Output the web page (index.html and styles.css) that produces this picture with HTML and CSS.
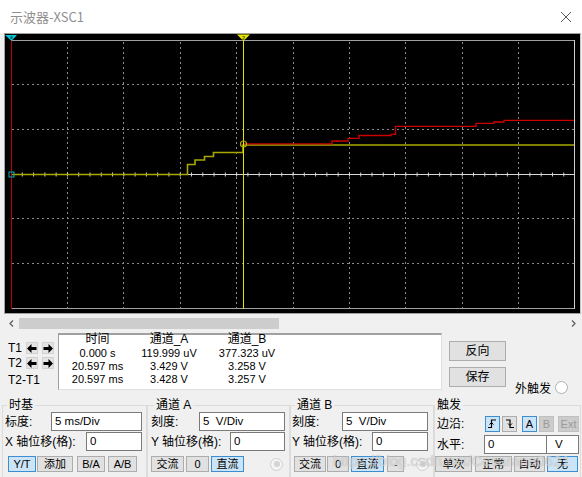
FILE: index.html
```html
<!DOCTYPE html>
<html lang="zh-CN">
<head>
<meta charset="utf-8">
<title>示波器-XSC1</title>
<link rel="stylesheet" href="styles.css">
</head>
<body>
<div class="titlebar">
  <span class="title">示波器-XSC1</span>
  <svg class="close" width="12" height="12" viewBox="0 0 12 12"><path d="M1 1L11 11M11 1L1 11" stroke="#5a5a5a" stroke-width="1"/></svg>
</div>

<div class="scope">
  <svg class="plot" width="575" height="279" viewBox="5 34 575 279">
    <rect x="5" y="34" width="575" height="279" fill="#000"/>
    <g stroke="#8a8a8a" stroke-width="1" stroke-dasharray="2 3">
      <line x1="67.5" y1="42" x2="67.5" y2="308"/>
      <line x1="123.5" y1="42" x2="123.5" y2="308"/>
      <line x1="180.5" y1="42" x2="180.5" y2="308"/>
      <line x1="236.5" y1="42" x2="236.5" y2="308"/>
      <line x1="293.5" y1="42" x2="293.5" y2="308"/>
      <line x1="349.5" y1="42" x2="349.5" y2="308"/>
      <line x1="405.5" y1="42" x2="405.5" y2="308"/>
      <line x1="462.5" y1="42" x2="462.5" y2="308"/>
      <line x1="518.5" y1="42" x2="518.5" y2="308"/>
      <line x1="12" y1="84.5" x2="574" y2="84.5"/>
      <line x1="12" y1="129.5" x2="574" y2="129.5"/>
      <line x1="12" y1="218.5" x2="574" y2="218.5"/>
      <line x1="12" y1="263.5" x2="574" y2="263.5"/>
    </g>
    <line x1="11" y1="174.5" x2="575" y2="174.5" stroke="#d8d8d8" stroke-width="1"/>
    <line x1="21.8" y1="174.5" x2="575" y2="174.5" stroke="#d8d8d8" stroke-width="4" stroke-dasharray="1 10.28"/>
    <g stroke="#a0a0a0" stroke-width="1" fill="none">
      <line x1="11" y1="40.5" x2="575" y2="40.5"/>
      <line x1="11" y1="308.5" x2="575" y2="308.5"/>
      <line x1="574.5" y1="40" x2="574.5" y2="309" stroke="#d0d0d0"/>
    </g>
    <polyline fill="none" stroke="#a8a800" stroke-width="1.6" points="11,174.5 187.5,174.5 187.5,164.5 195,164.5 195,160 204.5,160 204.5,156.5 213.5,156.5 213.5,152.5 243,152.5 243,145 574,145"/>
    <polyline fill="none" stroke="#cc0000" stroke-width="1.3" points="243,143.8 332,143.8 332,141 348,141 348,138.3 359,138.3 359,135.5 391,135.5 391,134.3 395.5,134.3 395.5,126.3 476,126.3 476,123.3 494,123.3 494,122 504,122 504,120.3 574,120.3"/>
    <line x1="11.5" y1="40" x2="11.5" y2="309" stroke="#c00000" stroke-width="1"/>
    <line x1="243.5" y1="40" x2="243.5" y2="309" stroke="#e4e400" stroke-width="1"/>
    <rect x="9" y="172" width="5" height="5" fill="none" stroke="#00b0c0" stroke-width="1"/>
    <circle cx="243.5" cy="144" r="3" fill="none" stroke="#b0b000" stroke-width="1.2"/>
    <polygon points="5,35 17,35 11.5,41" fill="#00c8d8"/>
    <rect x="10.5" y="36" width="2" height="3" fill="#006070"/>
    <polygon points="237,34.5 250,34.5 243.5,41" fill="#e8e800"/>
    <text x="243.5" y="39.5" font-size="5.5" font-family="Liberation Sans, sans-serif" font-weight="bold" text-anchor="middle" fill="#505000">2</text>
  </svg>
</div>

<div class="hscroll">
  <svg class="chev" width="12" height="9" viewBox="0 0 12 9"><path d="M7 1.5L4 4.5L7 7.5" fill="none" stroke="#606060" stroke-width="1.3"/></svg>
  <div class="thumb"></div>
  <div class="track"></div>
  <svg class="chev" width="12" height="9" viewBox="0 0 12 9"><path d="M5 1.5L8 4.5L5 7.5" fill="none" stroke="#606060" stroke-width="1.3"/></svg>
</div>

<div class="info">
  <div class="cursors">
    <div class="crow">
      <span class="tname">T1</span>
      <span class="abtn"><svg width="10" height="9" viewBox="0 0 10 9"><polygon points="0,4.5 4.5,0 4.5,3 9.5,3 9.5,6 4.5,6 4.5,9" fill="#000"/></svg></span>
      <span class="abtn"><svg width="10" height="9" viewBox="0 0 10 9"><polygon points="10,4.5 5.5,0 5.5,3 0.5,3 0.5,6 5.5,6 5.5,9" fill="#000"/></svg></span>
    </div>
    <div class="crow">
      <span class="tname">T2</span>
      <span class="abtn"><svg width="10" height="9" viewBox="0 0 10 9"><polygon points="0,4.5 4.5,0 4.5,3 9.5,3 9.5,6 4.5,6 4.5,9" fill="#000"/></svg></span>
      <span class="abtn"><svg width="10" height="9" viewBox="0 0 10 9"><polygon points="10,4.5 5.5,0 5.5,3 0.5,3 0.5,6 5.5,6 5.5,9" fill="#000"/></svg></span>
    </div>
    <div class="tdiff">T2-T1</div>
  </div>

  <div class="readout">
    <span class="hd">时间</span><span class="hd">通道_A</span><span class="hd">通道_B</span>
    <span>0.000 s</span><span>119.999 uV</span><span>377.323 uV</span>
    <span>20.597 ms</span><span>3.429 V</span><span>3.258 V</span>
    <span>20.597 ms</span><span>3.428 V</span><span>3.257 V</span>
  </div>

  <div class="actions">
    <button class="btn big">反向</button>
    <button class="btn big">保存</button>
  </div>

  <div class="ext">
    <span class="cjk">外触发</span>
    <span class="radio"></span>
  </div>
</div>

<div class="controls">
  <fieldset class="grp g1">
    <legend>时基</legend>
    <div class="frow"><span class="lbl w46">标度:</span><span class="inp w91">5 ms/Div</span></div>
    <div class="frow r2"><span class="lbl w81">X 轴位移(格):</span><span class="inp w56">0</span></div>
    <div class="brow b1">
      <button class="btn on w28">Y/T</button>
      <button class="btn w36 m1">添加</button>
      <button class="btn w28 m4">B/A</button>
      <button class="btn w29 m3">A/B</button>
    </div>
  </fieldset>

  <fieldset class="grp g2">
    <legend>通道 A</legend>
    <div class="frow"><span class="lbl w48">刻度:</span><span class="inp w86">5&nbsp;&nbsp;V/Div</span></div>
    <div class="frow r2"><span class="lbl w79">Y 轴位移(格):</span><span class="inp w55">0</span></div>
    <div class="brow">
      <button class="btn w33">交流</button>
      <button class="btn w23 m2">0</button>
      <button class="btn on w33 m2">直流</button>
      <span class="radio dis m26"></span>
    </div>
  </fieldset>

  <fieldset class="grp g3">
    <legend>通道 B</legend>
    <div class="frow"><span class="lbl w50">刻度:</span><span class="inp w86">5&nbsp;&nbsp;V/Div</span></div>
    <div class="frow r2"><span class="lbl w80">Y 轴位移(格):</span><span class="inp w56">0</span></div>
    <div class="brow b3">
      <button class="btn w32">交流</button>
      <button class="btn w22 m1">0</button>
      <button class="btn on w33 m2">直流</button>
      <button class="btn w17 m3">-</button>
      <span class="radio dis m12"></span>
    </div>
  </fieldset>

  <fieldset class="grp g4">
    <legend>触发</legend>
    <div class="frow e1">
      <span class="lbl w48">边沿:</span>
      <button class="btn on sq"><svg width="11" height="11" viewBox="0 0 11 11"><path d="M1 9.5H4.5V2H9" fill="none" stroke="#000" stroke-width="1.2"/><path d="M2.5 6.5L4.5 4.5L6.5 6.5" fill="none" stroke="#000" stroke-width="1"/></svg></button>
      <button class="btn sq m2"><svg width="11" height="11" viewBox="0 0 11 11"><path d="M2 2H6V9.5H10" fill="none" stroke="#000" stroke-width="1.2"/><path d="M4 5.5L6 7.5L8 5.5" fill="none" stroke="#000" stroke-width="1"/></svg></button>
      <button class="btn on sq m5">A</button>
      <button class="btn dim sq m2">B</button>
      <button class="btn dim w21 m4">Ext</button>
    </div>
    <div class="frow e2">
      <span class="lbl w47">水平:</span>
      <span class="inp w63">0</span>
      <span class="inp unit">V</span>
    </div>
    <div class="brow b4">
      <button class="btn w37">单次</button>
      <button class="btn w37 m3">正常</button>
      <button class="btn w31 m2">自动</button>
      <button class="btn on w31 m2">无</button>
    </div>
  </fieldset>
</div>

<div class="watermark">https://blog.csdn.net/Cesarana0621</div>
</body>
</html>
```

FILE: styles.css
```css
* { box-sizing: border-box; }
html, body { margin: 0; padding: 0; }
body {
  width: 582px;
  height: 477px;
  overflow: hidden;
  position: relative;
  background: #f0f0f0;
  font-family: "Liberation Sans", "Noto Sans CJK SC", sans-serif;
  font-size: 12px;
  color: #000;
}
.cjk, legend, .lbl, .btn, .hd { font-family: "Liberation Sans", "Noto Sans CJK SC", sans-serif; }

.titlebar {
  height: 33px;
  background: #fff;
  display: flex;
  align-items: center;
  justify-content: space-between;
  padding: 0 10px 0 10px;
}
.title { font-family: "Noto Sans CJK SC", sans-serif; font-size: 13px; color: #8f8f8f; line-height: 16px; margin-top: 1px; }
.close { display: block; margin-top: 1px; }

.scope {
  margin-left: 4px;
  width: 577px;
  height: 281px;
  border: 1px solid #a0a0a0;
  border-right-color: #c8c8c8;
  background: #000;
}
.plot { display: block; }

.hscroll {
  height: 17px;
  display: flex;
  align-items: center;
  padding: 1px 3px 0 6px;
}
.chev { display: block; }
.thumb { width: 260px; height: 11px; background: #cdcdcd; margin-left: 1px; }
.track { flex: 1; }

.info { display: flex; height: 61px; }
.cursors { width: 58px; padding: 11px 0 0 8px; }
.crow { display: flex; align-items: center; height: 12px; margin-bottom: 3px; }
.tname { width: 19px; font-size: 12px; line-height: 12px; }
.abtn {
  width: 12px; height: 12px;
  background: #e3e3e3;
  border: 1px solid #d2d2d2;
  display: flex; align-items: center; justify-content: center;
  margin-right: 4px;
}
.abtn svg { display: block; }
.tdiff { font-size: 12px; line-height: 14px; margin-top: 4px; }

.readout {
  width: 384px;
  height: 57px;
  margin-top: 2px;
  background: #fff;
  border-top: 2px solid #a0a0a0;
  border-left: 1px solid #a0a0a0;
  border-right: 1px solid #e0e0e0;
  border-bottom: 1px solid #e0e0e0;
  display: grid;
  grid-template-columns: 77px 68px 86px;
  grid-template-rows: 12px 13px 13px 13px;
  font-size: 11px;
}
.readout span { text-align: center; line-height: 13px; white-space: nowrap; }
.readout .hd { font-size: 12px; line-height: 9px; }
.readout span:nth-child(3n+2) { padding-right: 2px; }

.actions { margin-left: 7px; padding-top: 10px; display: flex; flex-direction: column; gap: 6px; }
.btn {
  height: 16px;
  padding: 0;
  margin: 0;
  background: #e1e1e1;
  border: 1px solid #adadad;
  font-size: 11px;
  line-height: 14px;
  color: #000;
  display: flex; align-items: center; justify-content: center;
  flex: none;
}
.btn.big { width: 57px; height: 20px; font-size: 12px; }
.btn.on { background: #cce4f7; border-color: #3d8ed0; }
.btn.dim { background: #cccccc; border-color: #c0c0c0; color: #9a9a9a; }
.btn.sq { width: 15px; }

.ext { display: flex; align-items: center; height: 17px; margin-top: 48px; margin-left: 9px; font-size: 12px; }
.ext .cjk { width: 40px; }
.radio {
  width: 13px; height: 13px;
  border-radius: 50%;
  background: #fff;
  border: 1px solid #b0b0b0;
  display: block;
  flex: none;
  position: relative;
}
.radio.dis { background: #f4f4f4; border-color: #cfcfcf; }
.radio.dis::after {
  content: "";
  position: absolute;
  left: 2.5px; top: 2.5px;
  width: 6px; height: 6px;
  border-radius: 50%;
  background: #d4d4d4;
}

.controls { display: flex; padding-top: 6px; }
.grp {
  margin: 0;
  height: 90px;
  border: 1px solid #dcdcdc;
  padding: 0 0 0 2px;
  min-width: 0;
}
.grp legend { font-size: 12px; line-height: 14px; padding: 0 2px; }
.g1 { margin-left: 2px; width: 145px; }
.g1 legend { margin-left: 2px; }
.g2 { width: 143px; padding-left: 3px; }
.g2 legend { margin-left: 3px; }
.g3 { width: 144px; padding-left: 1px; }
.g3 legend { margin-left: 3px; }
.g4 { width: 147px; padding-left: 2px; }
.g4 legend { margin-left: -2px; }

.frow { display: flex; align-items: center; height: 19px; white-space: nowrap; }
.frow.r2 { margin-top: 1px; }
.lbl { font-size: 12px; line-height: 16px; flex: none; }
.inp {
  height: 19px;
  background: #fff;
  border: 1px solid #7a7a7a;
  padding-left: 3px;
  font-size: 11.5px;
  line-height: 17px;
  flex: none;
  white-space: pre;
}
.brow { display: flex; align-items: center; margin-top: 5px; height: 16px; }
.b1 { margin-left: 3px; }
.b3 { margin-left: 2px; }
.b4 { margin-left: -2px; margin-top: 2px; }
.e1 { margin-top: 3px; height: 17px; }
.e1 .btn { height: 16px; }
.e2 { margin-top: 3px; height: 19px; }
.e2 .inp { height: 19px; }
.unit { width: 32px; padding-left: 8px; border-left: none; }

.w17 { width: 17px; } .w21 { width: 21px; } .w22 { width: 22px; } .w23 { width: 23px; }
.w28 { width: 28px; } .w29 { width: 29px; } .w31 { width: 31px; } .w32 { width: 32px; }
.w33 { width: 33px; } .w36 { width: 36px; } .w37 { width: 37px; }
.w46 { width: 46px; } .w47 { width: 47px; } .w48 { width: 48px; } .w50 { width: 50px; }
.w55 { width: 55px; } .w56 { width: 56px; } .w63 { width: 63px; }
.w79 { width: 79px; } .w80 { width: 80px; } .w81 { width: 81px; }
.w86 { width: 86px; } .w91 { width: 91px; }
.m1 { margin-left: 1px; } .m2 { margin-left: 2px; } .m3 { margin-left: 3px; }
.m4 { margin-left: 4px; } .m5 { margin-left: 5px; } .m12 { margin-left: 12px; } .m26 { margin-left: 26px; }

.watermark {
  position: absolute;
  left: 333px;
  top: 452px;
  font-family: "Liberation Sans", sans-serif;
  font-size: 15px;
  line-height: 18px;
  color: rgba(255, 255, 255, 0.5);
  text-shadow: 0 0 1px rgba(110, 110, 110, 0.55);
  white-space: nowrap;
  pointer-events: none;
}
```
